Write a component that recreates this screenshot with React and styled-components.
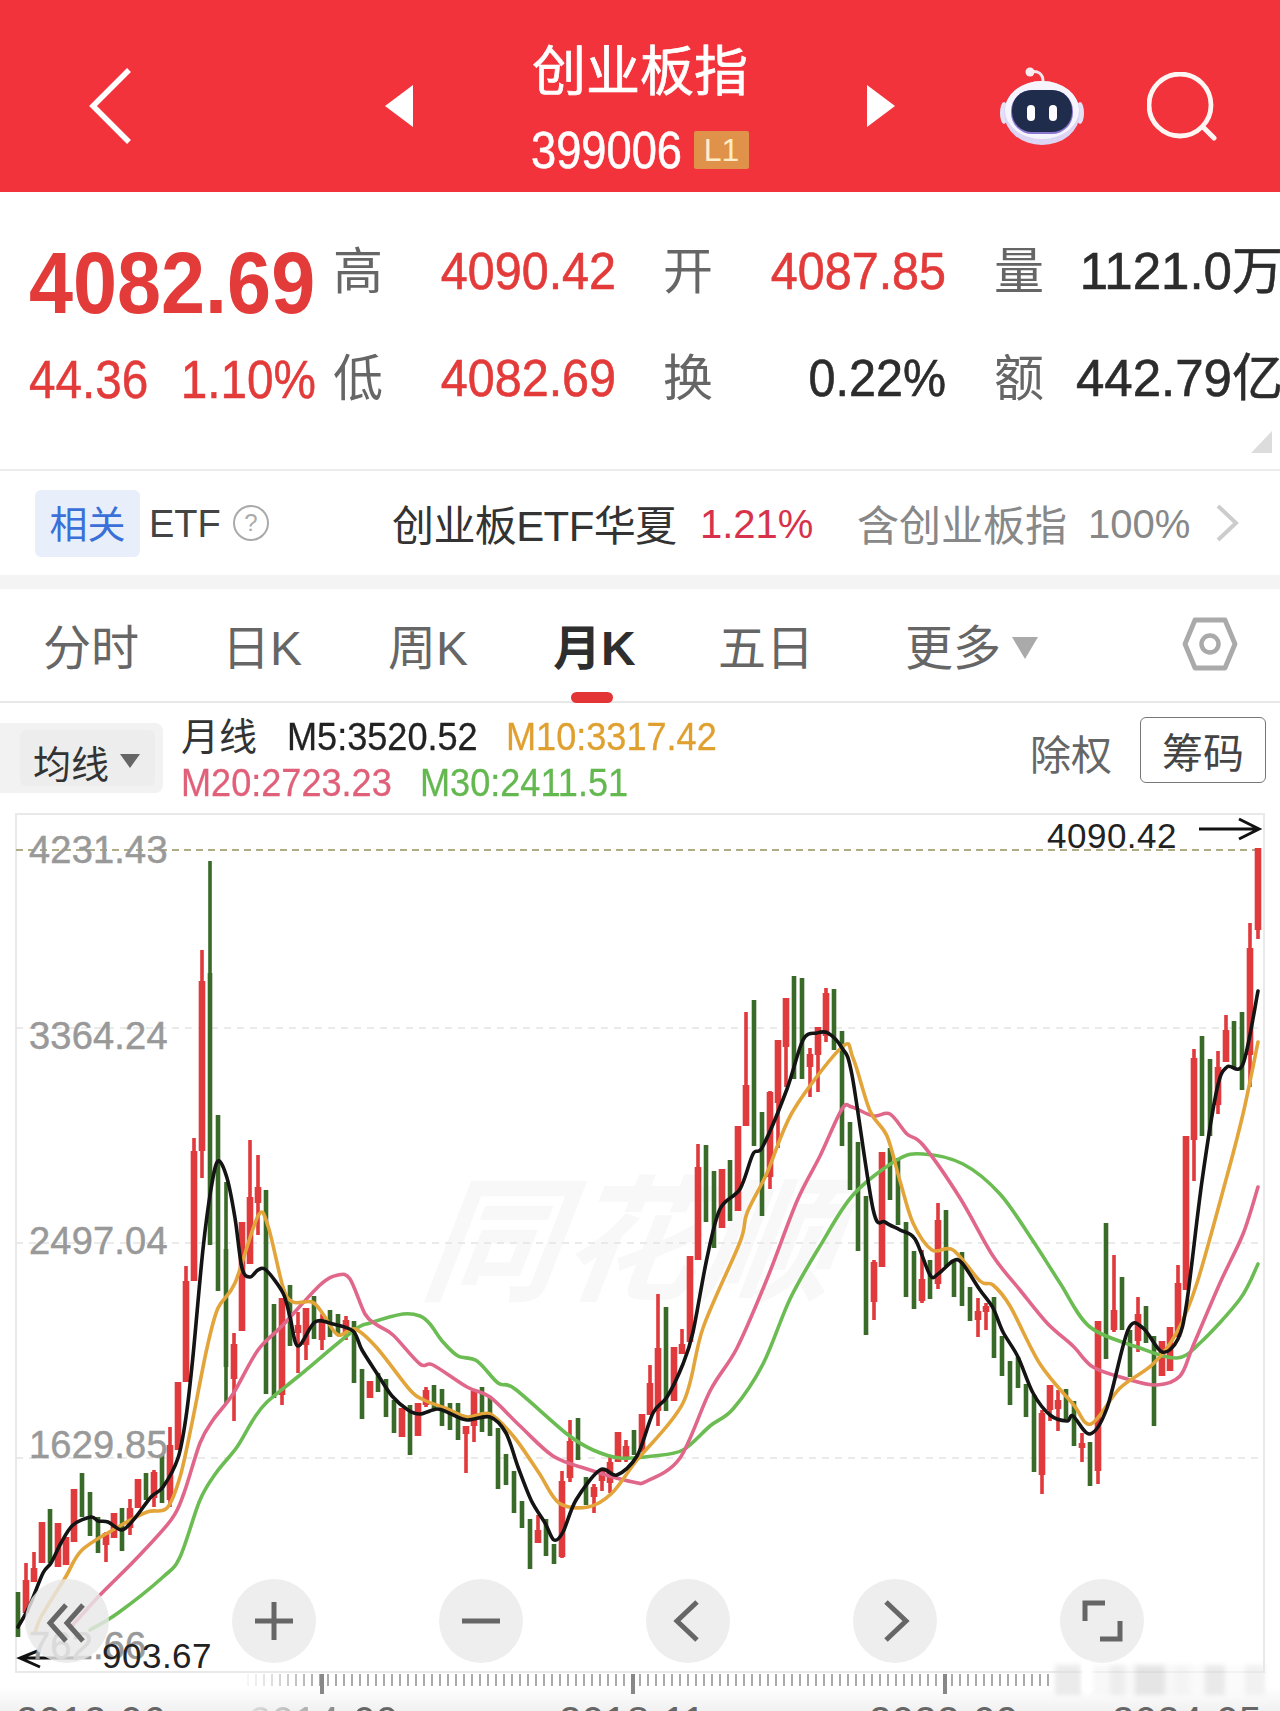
import React from 'react';
import styled, { createGlobalStyle } from 'styled-components';

const CJK = `"Liberation Sans", "Noto Sans CJK SC", sans-serif`;
const RED = '#e33a3a';

const Global = createGlobalStyle`
  html, body { margin: 0; padding: 0; background: #fff; }
  body { font-family: ${CJK}; width: 1280px; height: 1711px; overflow: hidden; }
`;

const Page = styled.div`
  width: 1280px; height: 1711px; overflow: hidden; display: flex; flex-direction: column; background: #fff;
`;
const Header = styled.header`
  height: 192px; background: #f2333b; display: flex; align-items: center; color: #fff; flex: none;
  padding: 19px 0 0 88px; box-sizing: border-box;
`;
const HeaderMid = styled.div`
  margin-left: 251px; display: flex; align-items: center; width: 510px; justify-content: space-between;
`;
const TitleBlock = styled.div`display: flex; flex-direction: column; align-items: center;`;
const Title = styled.div`font-size: 54px; line-height: 62px; font-weight: 400; -webkit-text-stroke: .7px #fff;`;
const CodeRow = styled.div`display: flex; align-items: center; gap: 13px; margin-top: 27px;`;
const Code = styled.div`
  font-size: 52px; line-height: 40px; width: 150px; transform: scaleX(.87); transform-origin: left; white-space: nowrap; -webkit-text-stroke: .6px #fff;
`;
const Badge = styled.div`
  width: 55px; height: 38px; background: #e0924a; color: #ffecc8; font-size: 32px; line-height: 38px;
  text-align: center; border-radius: 2px;
`;
const HeaderRight = styled.div`margin-left: 105px; display: flex; align-items: center; gap: 63px;`;
const SearchSvg = styled.svg`margin-top: 5px;`;

const Stats = styled.section`
  height: 279px; box-sizing: border-box; border-bottom: 2px solid #ececec; position: relative; flex: none;
  display: grid; grid-template-columns: 304px 108px 222px 108px 223px 82px 1fr; grid-template-rows: 107px 108px;
  padding: 26px 2px 0 29px; align-items: center;
`;
const BigPrice = styled.div`
  font-size: 87px; font-weight: 700; color: ${RED}; line-height: 84px; margin-top: 22px;
  transform: scaleX(.91); transform-origin: left; white-space: nowrap;
`;
const ChangeRow = styled.div`
  display: flex; gap: 36px; color: ${RED}; font-size: 53px; white-space: nowrap; transform: scaleX(.9); transform-origin: left; -webkit-text-stroke: .5px currentColor;
`;
const StatLabel = styled.div`font-size: 50px; color: #666; line-height: 60px;`;
const StatValue = styled.div`
  font-size: 51px; line-height: 60px; white-space: nowrap; color: ${p => p.$dark ? '#2c2c2c' : RED};
  text-align: right; width: 187px; margin-left: -12px;
  transform: scaleX(.95); transform-origin: right; -webkit-text-stroke: .6px currentColor;
`;
const EndValue = styled.div`
  font-size: 51px; line-height: 60px; white-space: nowrap; color: #2c2c2c; justify-self: end;
  -webkit-text-stroke: .6px currentColor;
`;
const Corner = styled.div`
  position: absolute; right: 8px; bottom: 16px; width: 0; height: 0;
  border-left: 21px solid transparent; border-bottom: 22px solid #dcdcdc;
`;

const EtfRow = styled.section`
  height: 104px; flex: none; display: flex; align-items: center; padding-left: 35px; box-sizing: border-box; font-size: 42px; color: #333;
`;
const Tag = styled.div`
  width: 105px; height: 67px; padding-bottom: 3px; box-sizing: border-box; background: #e8effb; color: #3a70d8; border-radius: 6px; display: flex; align-items: center; justify-content: center; font-size: 38px;
`;
const EtfWord = styled.span`margin: 2px 0 0 9px; width: 74px; font-size: 38px; color: #444;`;
const Help = styled.span`
  margin-left: 10px; width: 36px; height: 36px; box-sizing: border-box; border: 2px solid #aaa; border-radius: 50%; color: #aaa; font-size: 24px; text-align: center; line-height: 32px;
`;
const EtfName = styled.span`margin-left: 123px; width: 283px; white-space: nowrap; letter-spacing: -.6px; margin-bottom: 2px;`;
const EtfPct = styled.span`margin: 3px 0 0 25px; color: #d6334a; width: 157px; font-size: 40px;`;
const EtfGray = styled.span`color: #888; white-space: nowrap; width: 210px; margin-bottom: 2px;`;
const EtfHold = styled.span`color: #888; margin: 3px 0 0 21px; width: 127px; white-space: nowrap; font-size: 40px;`;
const Band = styled.div`height: 14px; background: #f4f4f4; flex: none;`;

const Tabs = styled.nav`
  height: 114px; flex: none; border-bottom: 2px solid #e8e8e8; position: relative; box-sizing: border-box;
  display: flex; align-items: center; padding-left: 43px; font-size: 48px; color: #666;
`;
const Tab = styled.div`
  width: ${p => p.$w}px; flex: none; white-space: nowrap; padding-bottom: 2px;
  color: ${p => p.$on ? '#2e2e2e' : '#666'}; font-weight: ${p => p.$on ? 700 : 400}; position: relative;
`;
const TabMark = styled.i`
  position: absolute; left: 18px; bottom: -22px; width: 42px; height: 11px; border-radius: 6px; background: #e33535;
`;
const Caret = styled.i`
  display: inline-block; width: 0; height: 0; margin-left: 11px; vertical-align: 6px;
  border-left: 13px solid transparent; border-right: 13px solid transparent; border-top: 22px solid #aaa;
`;
const GearSlot = styled.div`position: absolute; right: 42px; top: 28px; line-height: 0;`;

const Controls = styled.section`
  height: 110px; flex: none; position: relative; display: flex; box-sizing: border-box; padding-top: 14px;
`;
const MaSelect = styled.div`
  width: 163px; height: 70px; margin-top: 6px; background: #f2f2f2; border-radius: 0 8px 8px 0; display: flex; align-items: center;
  padding-left: 20px; box-sizing: border-box;
`;
const MaSelectInner = styled.div`
  background: #ededed; width: 135px; height: 56px; display: flex; align-items: center; padding: 6px 0 0 13px; box-sizing: border-box; font-size: 38px; color: #333; gap: 11px; white-space: nowrap; border-radius: 6px;
`;
const SmallCaret = styled.i`
  width: 0; height: 0; border-left: 10px solid transparent; border-right: 10px solid transparent; border-top: 14px solid #666;
`;
const MaText = styled.div`margin-left: 18px; display: flex; flex-direction: column; gap: 6px;`;
const MaLine = styled.div`display: flex; align-items: center; font-size: 38px; line-height: 40px; white-space: nowrap;`;
const MaName = styled.span`color: #333; width: 76px; margin-right: 30px;`;
const MaItem = styled.span`
  color: ${p => p.$c}; margin-right: 30px; display: inline-block; width: ${p => p.$w}px; transform: scaleX(.95); transform-origin: left; white-space: nowrap; -webkit-text-stroke: .3px currentColor;
`;
const ExRight = styled.div`font-size: 41px; color: #666; position: absolute; right: 168px; top: 29px; line-height: 48px;`;
const ChipBtn = styled.div`
  position: absolute; right: 14px; top: 14px; width: 126px; height: 66px; box-sizing: border-box; border: 1.5px solid #777; border-radius: 6px;
  font-size: 41px; color: #444; display: flex; align-items: center; justify-content: center;
`;

const Chart = styled.section`
  position: relative; margin-left: 15px; width: 1250px; height: 860px; flex: none; box-sizing: border-box;
`;
const Plot = styled.svg`display: block; position: absolute; left: 0; top: 0;`;
const Watermark = styled.div`
  position: absolute; left: 410px; top: 360px; font-size: 136px; letter-spacing: 2px; line-height: 140px; font-style: italic; font-weight: 700; color: #f8f8f8; white-space: nowrap; transform: skewX(-8deg);
`;
const AxisLabel = styled.div`
  position: absolute; left: 14px; top: ${p => p.$top}px; font-size: 38px; line-height: 40px; color: #999; letter-spacing: .2px;
  -webkit-text-stroke: .5px #999;
`;
const ExtremeLabel = styled.div`
  position: absolute; left: ${p => p.$left}px; top: ${p => p.$top}px; font-size: 35px; line-height: 38px; color: #222; letter-spacing: .5px;
`;
const ZoomBar = styled.div`position: absolute; left: 10px; top: 766px; display: flex; gap: 123px;`;
const ZoomBtn = styled.div`
  width: 84px; height: 84px; border-radius: 50%; background: ${p => p.$soft ? 'rgba(232,232,232,.82)' : '#eeeeee'}; display: flex; align-items: center; justify-content: center;
`;

const Ruler = styled.div`
  flex: 1; position: relative;
  background: linear-gradient(#fff 0, #fff 14px, #f1f1f1 100%);
`;
const TickRow = styled.svg`display: block; position: absolute; left: 0; top: 0;`;
const DateRow = styled.div`position: absolute; left: 0; top: 25px; width: 1280px; height: 46px;`;
const DateText = styled.span`
  position: absolute; left: ${p => p.$left}px; top: 0; font-size: 40px; line-height: 46px; white-space: pre; letter-spacing: .4px;
  color: ${p => p.$soft ? 'transparent' : '#666'};
  background: ${p => p.$soft ? 'linear-gradient(90deg, #ddd 0, #aaa 45%, #666 70%)' : 'none'};
  -webkit-background-clip: ${p => p.$soft ? 'text' : 'border-box'}; background-clip: ${p => p.$soft ? 'text' : 'border-box'};
`;
const BlurMark = styled.div`
  position: absolute; left: 1055px; top: -8px; width: 210px; height: 30px; opacity: .6; filter: blur(2.5px);
  background: linear-gradient(90deg,
    #dedede 0 26px, #fff 26px 38px, #f4f4f4 38px 55px, #e2e2e2 55px 70px, #f6f6f6 70px 80px,
    #d4d4d4 80px 110px, #f4f4f4 110px 120px, #eeeeee 120px 135px, #f8f8f8 135px 150px,
    #dcdcdc 150px 170px, #fafafa 170px 190px, #e8e8e8 190px 210px);
`;
const BlurPill = styled.div`
  position: absolute; left: 1082px; top: -13px; width: 10px; height: 34px; border-radius: 5px; background: #fff; filter: blur(1px);
`;

// [kind, wickTop, bodyTop, bodyBottom, wickBottom]
const C = [
['g',1592,1592,1637,1637],['r',1563,1580,1613,1613],['r',1552,1568,1582,1582],['r',1522,1522,1563,1563],['g',1509,1509,1563,1563],
['r',1523,1523,1567,1567],['r',1537,1537,1565,1565],['r',1489,1489,1542,1542],['g',1473,1473,1517,1517],['g',1492,1492,1536,1536],
['g',1517,1517,1553,1553],['r',1532,1533,1545,1562],['r',1513,1513,1538,1538],['g',1508,1508,1551,1551],['r',1499,1508,1528,1535],
['r',1479,1479,1508,1508],['g',1473,1473,1500,1500],['r',1470,1472,1498,1507],['g',1455,1455,1503,1503],['r',1427,1445,1500,1507],
['r',1382,1382,1450,1450],['r',1266,1281,1382,1382],['r',1138,1151,1281,1281],['r',950,981,1151,1178],['g',861,973,1245,1245],
['g',1115,1115,1291,1291],['g',1182,1249,1367,1404],['r',1333,1344,1379,1421],['r',1222,1222,1331,1331],['r',1140,1197,1264,1264],
['r',1155,1187,1203,1235],['g',1190,1190,1394,1394],['g',1304,1304,1398,1398],['r',1298,1298,1395,1405],['g',1285,1285,1346,1346],
['r',1312,1325,1333,1373],['r',1308,1308,1345,1360],['g',1296,1296,1339,1339],['r',1314,1321,1340,1350],['g',1310,1310,1337,1337],
['g',1314,1314,1335,1335],['r',1316,1320,1335,1340],['g',1321,1321,1383,1383],['g',1369,1369,1419,1419],['r',1381,1381,1398,1398],
['g',1373,1373,1392,1392],['g',1379,1379,1417,1417],['g',1400,1400,1433,1433],['r',1408,1408,1437,1437],['g',1405,1405,1455,1455],
['r',1403,1403,1436,1436],['r',1387,1390,1405,1407],['g',1385,1385,1410,1410],['g',1389,1389,1426,1426],['g',1403,1403,1430,1430],
['g',1403,1403,1440,1440],['r',1426,1426,1434,1473],['r',1391,1391,1426,1442],['g',1387,1387,1432,1432],['g',1397,1397,1436,1436],
['g',1428,1428,1489,1489],['g',1454,1454,1485,1485],['g',1471,1471,1513,1513],['g',1501,1501,1528,1528],['g',1519,1519,1569,1569],
['r',1515,1530,1543,1543],['g',1519,1519,1556,1556],['g',1544,1544,1564,1564],['r',1471,1481,1557,1558],['r',1420,1441,1478,1482],
['g',1418,1418,1460,1460],['g',1477,1477,1505,1505],['r',1484,1487,1497,1513],['r',1469,1471,1481,1491],['r',1456,1462,1483,1493],
['r',1432,1432,1462,1462],['r',1440,1446,1460,1462],['g',1430,1430,1455,1455],['r',1414,1414,1452,1452],['r',1365,1383,1415,1415],
['r',1294,1348,1411,1426],['g',1307,1307,1411,1411],['r',1347,1347,1401,1401],['r',1329,1344,1354,1354],['r',1256,1256,1342,1342],
['r',1144,1167,1260,1260],['g',1145,1145,1222,1222],['g',1171,1171,1248,1248],['r',1169,1169,1228,1228],['g',1160,1160,1221,1221],
['r',1126,1126,1211,1211],['r',1012,1085,1126,1126],['g',1000,1000,1146,1146],['g',1112,1112,1216,1216],['r',1091,1092,1177,1189],
['r',1040,1040,1103,1148],['r',998,998,1047,1087],['g',976,976,1079,1079],['g',978,978,1079,1079],['r',1048,1054,1067,1097],
['r',1027,1027,1055,1092],['r',988,993,1036,1042],['g',989,989,1050,1050],['g',1031,1031,1146,1146],['g',1122,1122,1190,1190],
['g',1142,1142,1251,1251],['g',1196,1196,1335,1335],['r',1260,1262,1302,1320],['r',1152,1152,1267,1267],['g',1148,1148,1200,1200],
['g',1158,1158,1225,1225],['g',1222,1222,1297,1297],['g',1251,1251,1309,1309],['r',1250,1279,1301,1303],['g',1260,1260,1299,1299],
['r',1203,1220,1284,1289],['g',1210,1210,1266,1266],['g',1262,1262,1297,1297],['g',1252,1252,1306,1306],['g',1287,1287,1321,1321],
['r',1298,1311,1320,1337],['r',1303,1306,1312,1330],['g',1297,1297,1358,1358],['g',1336,1336,1376,1376],['g',1361,1361,1405,1405],
['g',1357,1357,1388,1388],['g',1384,1384,1417,1417],['g',1395,1395,1472,1472],['r',1410,1413,1475,1494],['r',1385,1385,1410,1421],
['r',1390,1400,1409,1431],['g',1389,1389,1419,1419],['g',1401,1401,1446,1446],['r',1433,1443,1448,1462],['g',1442,1442,1486,1486],
['r',1321,1321,1471,1484],['g',1223,1223,1359,1359],['r',1255,1310,1330,1332],['g',1277,1277,1330,1330],['g',1330,1330,1377,1377],
['r',1297,1314,1341,1352],['g',1306,1306,1343,1343],['g',1336,1336,1426,1426],['r',1341,1341,1376,1376],['r',1327,1327,1371,1371],
['r',1265,1283,1337,1337],['r',1136,1136,1290,1290],['r',1049,1058,1140,1181],['g',1036,1036,1136,1136],['g',1059,1059,1136,1136],
['r',1051,1067,1105,1114],['r',1015,1030,1062,1062],['g',1021,1021,1069,1069],['g',1012,1012,1090,1090],['r',923,948,1055,1087],
['r',848,848,930,939],
];

const MA5 = [[18,1627],[29,1607],[43,1573],[51,1563],[61,1543],[73,1525],[91,1517],[98,1521],[108,1522],[122,1530],[135,1518],[151,1497],[163,1487],[178,1458],[186,1417],[193,1356],[203,1249],[211,1189],[218,1161],[227,1178],[235,1218],[242,1268],[250,1277],[258,1270],[266,1270],[283,1293],[290,1317],[298,1346],[315,1322],[333,1324],[353,1331],[362,1350],[378,1375],[392,1396],[408,1410],[420,1414],[437,1409],[449,1413],[467,1420],[490,1417],[506,1433],[518,1467],[531,1500],[545,1523],[554,1540],[563,1532],[576,1500],[600,1470],[617,1475],[637,1456],[653,1413],[667,1397],[683,1364],[693,1332],[707,1258],[720,1209],[740,1189],[753,1154],[763,1146],[787,1089],[803,1040],[817,1033],[828,1033],[842,1048],[852,1075],[873,1209],[885,1222],[900,1230],[915,1239],[930,1275],[938,1274],[953,1261],[962,1263],[980,1290],[993,1308],[1003,1332],[1018,1357],[1033,1393],[1050,1415],[1067,1421],[1073,1416],[1090,1434],[1107,1408],[1128,1330],[1143,1328],[1162,1352],[1178,1339],[1187,1301],[1202,1181],[1217,1089],[1227,1067],[1243,1064],[1258,991]];
const MA10 = [[35,1633],[41,1617],[65,1578],[82,1550],[118,1527],[147,1512],[167,1508],[180,1477],[192,1423],[207,1348],[218,1308],[235,1283],[258,1216],[268,1226],[283,1287],[293,1302],[312,1302],[323,1314],[338,1335],[355,1329],[377,1348],[410,1390],[424,1400],[445,1408],[467,1417],[490,1414],[514,1437],[539,1473],[559,1503],[588,1507],[612,1493],[637,1460],[683,1403],[703,1328],[740,1242],[747,1213],[767,1173],[793,1111],[842,1047],[853,1058],[870,1111],[887,1136],[900,1181],[913,1223],[932,1250],[953,1250],[980,1281],[993,1285],[1010,1306],[1040,1364],[1073,1404],[1091,1424],[1120,1388],[1153,1364],[1177,1332],[1197,1283],[1227,1176],[1243,1114],[1258,1042]];
const MA20 = [[71,1627],[100,1595],[135,1560],[171,1520],[184,1493],[200,1443],[213,1420],[233,1394],[258,1350],[283,1325],[320,1285],[338,1275],[350,1279],[365,1314],[377,1325],[393,1335],[420,1364],[433,1365],[467,1387],[490,1397],[520,1426],[553,1456],[587,1469],[633,1482],[647,1481],[680,1458],[710,1391],[737,1348],[767,1279],[797,1201],[820,1156],[842,1109],[852,1107],[873,1116],[890,1114],[907,1134],[923,1145],[960,1198],[993,1256],[1020,1290],[1047,1323],[1073,1346],[1093,1367],[1127,1379],[1157,1385],[1180,1376],[1193,1346],[1220,1283],[1243,1234],[1258,1187]];
const MA30 = [[90,1630],[118,1613],[163,1577],[180,1557],[200,1500],[216,1473],[237,1447],[253,1420],[267,1402],[300,1375],[353,1331],[370,1323],[403,1314],[420,1316],[430,1324],[443,1342],[458,1356],[477,1361],[498,1383],[515,1389],[567,1434],[593,1450],[620,1458],[653,1456],[683,1450],[710,1426],[733,1409],[763,1364],[790,1299],[820,1246],[853,1195],[897,1160],[923,1154],[963,1164],[1000,1194],[1033,1241],[1060,1283],[1090,1327],[1140,1348],[1177,1358],[1200,1343],[1240,1299],[1258,1264]];

const smooth = pts => {
  let d = `M${pts[0][0]} ${pts[0][1]}`;
  for (let i = 0; i < pts.length - 1; i++) {
    const p0 = pts[Math.max(0, i - 1)], p1 = pts[i], p2 = pts[i + 1], p3 = pts[Math.min(pts.length - 1, i + 2)];
    const k = 0.16;
    d += `C${(p1[0] + (p2[0] - p0[0]) * k).toFixed(1)} ${(p1[1] + (p2[1] - p0[1]) * k).toFixed(1)} ${(p2[0] - (p3[0] - p1[0]) * k).toFixed(1)} ${(p2[1] - (p3[1] - p1[1]) * k).toFixed(1)} ${p2[0]} ${p2[1]}`;
  }
  return d;
};

const Candle = ({ i, d }) => {
  const [k, wt, bt, bb, wb] = d;
  const x = 18 + i * 8;
  const red = k === 'r';
  const bw = red ? 6.6 : 4.6;
  return (
    <g fill={red ? '#e03a3c' : '#3a6a28'}>
      <rect x={x - 1.8} y={wt} width={3.6} height={wb - wt} />
      <rect x={x - bw / 2} y={bt} width={bw} height={bb - bt} />
    </g>
  );
};

const MaPath = ({ pts, c, w = 3.6 }) => <path d={smooth(pts)} fill="none" stroke={c} strokeWidth={w} strokeLinejoin="round" strokeLinecap="round" />;

const BackIcon = () => (
  <svg width="46" height="78" viewBox="0 0 46 78"><path d="M41 3 5 39 41 75" fill="none" stroke="#fff" strokeWidth="5.5" /></svg>
);
const LeftTri = () => <svg width="28" height="42" viewBox="0 0 28 42"><path d="M28 0V42L0 21Z" fill="#fff" /></svg>;
const RightTri = () => <svg width="28" height="42" viewBox="0 0 28 42"><path d="M0 0V42L28 21Z" fill="#fff" /></svg>;
const Robot = () => (
  <svg width="84" height="78" viewBox="0 0 84 78">
    <path d="M30 5C38 3 43 7 43 14" fill="none" stroke="#f6e6ee" strokeWidth="3" />
    <circle cx="30" cy="5" r="4.5" fill="#f8eef2" />
    <ellipse cx="4" cy="46" rx="4" ry="11" fill="#e4e0f6" />
    <ellipse cx="80" cy="46" rx="4" ry="11" fill="#e4e0f6" />
    <ellipse cx="42" cy="46" rx="38" ry="32" fill="#dcd6f4" />
    <ellipse cx="42" cy="43" rx="37" ry="29" fill="#f6f5fd" />
    <rect x="11" y="23" width="62" height="44" rx="21" fill="#8a78d0" />
    <rect x="12" y="23" width="60" height="42" rx="20" fill="#202c4c" />
    <rect x="27" y="38" width="8" height="16" rx="4" fill="#fff" />
    <rect x="49" y="38" width="8" height="16" rx="4" fill="#fff" />
  </svg>
);
const SearchIcon = () => (
  <SearchSvg width="70" height="72" viewBox="0 0 70 72">
    <circle cx="33" cy="33" r="31" fill="none" stroke="#fff5f2" strokeWidth="4.8" />
    <path d="M56 55 67 66" fill="none" stroke="#fff5f2" strokeWidth="5" strokeLinecap="round" />
  </SearchSvg>
);
const Gear = () => (
  <svg width="56" height="54" viewBox="0 0 56 54">
    <path d="M13 3H43L53 27 43 51H13L3 27Z" fill="none" stroke="#aaa" strokeWidth="4.8" strokeLinejoin="round" />
    <circle cx="28" cy="27" r="8.5" fill="none" stroke="#aaa" strokeWidth="4.5" />
  </svg>
);
const Chevron = () => (
  <svg width="24" height="38" viewBox="0 0 24 38"><path d="M3 2 21 19 3 36" fill="none" stroke="#ccc" strokeWidth="4" /></svg>
);
const I = ({ d, w = 5 }) => (
  <svg width="44" height="44" viewBox="0 0 44 44"><path d={d} fill="none" stroke="#666" strokeWidth={w} /></svg>
);

const majors = [322, 633, 945];
const ticks = Array.from({ length: 101 }, (_, i) => 247 + i * 8);

export default function App() {
  return (
    <Page>
      <Global />
      <Header>
        <BackIcon />
        <HeaderMid>
          <LeftTri />
          <TitleBlock>
            <Title>创业板指</Title>
            <CodeRow><Code>399006</Code><Badge>L1</Badge></CodeRow>
          </TitleBlock>
          <RightTri />
        </HeaderMid>
        <HeaderRight><Robot /><SearchIcon /></HeaderRight>
      </Header>

      <Stats>
        <BigPrice>4082.69</BigPrice>
        <StatLabel>高</StatLabel><StatValue>4090.42</StatValue>
        <StatLabel>开</StatLabel><StatValue>4087.85</StatValue>
        <StatLabel>量</StatLabel><EndValue>1121.0万</EndValue>
        <ChangeRow><span>44.36</span><span>1.10%</span></ChangeRow>
        <StatLabel>低</StatLabel><StatValue>4082.69</StatValue>
        <StatLabel>换</StatLabel><StatValue $dark>0.22%</StatValue>
        <StatLabel>额</StatLabel><EndValue>442.79亿</EndValue>
        <Corner />
      </Stats>

      <EtfRow>
        <Tag>相关</Tag><EtfWord>ETF</EtfWord><Help>?</Help>
        <EtfName>创业板ETF华夏</EtfName>
        <EtfPct>1.21%</EtfPct>
        <EtfGray>含创业板指</EtfGray>
        <EtfHold>100%</EtfHold>
        <Chevron />
      </EtfRow>
      <Band />

      <Tabs>
        <Tab $w={179}>分时</Tab>
        <Tab $w={166}>日K</Tab>
        <Tab $w={165}>周K</Tab>
        <Tab $w={165} $on>月K<TabMark /></Tab>
        <Tab $w={187}>五日</Tab>
        <Tab $w={200}>更多<Caret /></Tab>
        <GearSlot><Gear /></GearSlot>
      </Tabs>

      <Controls>
        <MaSelect><MaSelectInner>均线<SmallCaret /></MaSelectInner></MaSelect>
        <MaText>
          <MaLine>
            <MaName>月线</MaName>
            <MaItem $c="#222" $w={189}>M5:3520.52</MaItem>
            <MaItem $c="#e0a030" $w={210}>M10:3317.42</MaItem>
          </MaLine>
          <MaLine>
            <MaItem $c="#e0607a" $w={209}>M20:2723.23</MaItem>
            <MaItem $c="#63b84f" $w={209}>M30:2411.51</MaItem>
          </MaLine>
        </MaText>
        <ExRight>除权</ExRight>
        <ChipBtn>筹码</ChipBtn>
      </Controls>

      <Chart>
        <Watermark>同花顺</Watermark>
        <Plot width="1250" height="860" viewBox="15 813 1250 860">
          <rect x="16" y="814" width="1248" height="858" fill="none" stroke="#e9e9e9" strokeWidth="2" />
          {[1028, 1243, 1458].map(y => <line key={y} x1="16" x2="1264" y1={y} y2={y} stroke="#e4e4e4" strokeWidth="1.5" strokeDasharray="7 6" />)}
          <line x1="16" x2="1264" y1="850" y2="850" stroke="#b0ac88" strokeWidth="2" strokeDasharray="7 5" />
          {C.map((d, i) => <Candle key={i} i={i} d={d} />)}
          <MaPath pts={MA30} c="#6bbc52" />
          <MaPath pts={MA20} c="#e0668a" />
          <MaPath pts={MA10} c="#e3a43a" />
          <MaPath pts={MA5} c="#141414" />
          <path d="M1199 829H1258M1239 819 1259 829 1239 839" fill="none" stroke="#111" strokeWidth="3" />
          <path d="M78 1658H20M40 1650 20 1658 40 1667" fill="none" stroke="#111" strokeWidth="3" />
        </Plot>
        <AxisLabel $top={17}>4231.43</AxisLabel>
        <AxisLabel $top={203}>3364.24</AxisLabel>
        <AxisLabel $top={408}>2497.04</AxisLabel>
        <AxisLabel $top={612}>1629.85</AxisLabel>
        <AxisLabel $top={813}>762.66</AxisLabel>
        <ExtremeLabel $left={1032} $top={4}>4090.42</ExtremeLabel>
        <ExtremeLabel $left={87} $top={824}>903.67</ExtremeLabel>
        <ZoomBar>
          <ZoomBtn $soft><I d="M21 6 5 24 21 42M38 6 22 24 38 42" /></ZoomBtn>
          <ZoomBtn><I d="M22 3V41M3 22H41" /></ZoomBtn>
          <ZoomBtn><I d="M3 22H41" /></ZoomBtn>
          <ZoomBtn><I d="M31 3 11 22 31 41" /></ZoomBtn>
          <ZoomBtn><I d="M13 3 33 22 13 41" /></ZoomBtn>
          <ZoomBtn><I d="M5 22V4H25M40 22V40H20" /></ZoomBtn>
        </ZoomBar>
      </Chart>

      <Ruler>
        <TickRow width="1280" height="24" viewBox="0 0 1280 24">
          {ticks.map((x, i) => <rect key={x} x={x} y="1" width="2" height="12" fill="#aaa" opacity={Math.min(1, (i + 1) / 10)} />)}
          {majors.map(x => <rect key={x} x={x - 2} y="1" width="4" height="20" fill="#888" />)}
        </TickRow>
        <BlurMark />
        <BlurPill />
        <DateRow>
          <DateText $left={16}>2012-06</DateText>
          <DateText $soft $left={249}>2014-09</DateText>
          <DateText $left={559}>2018-11</DateText>
          <DateText $left={869}>2022-09</DateText>
          <DateText $left={1112}>2024-05</DateText>
        </DateRow>
      </Ruler>
    </Page>
  );
}
